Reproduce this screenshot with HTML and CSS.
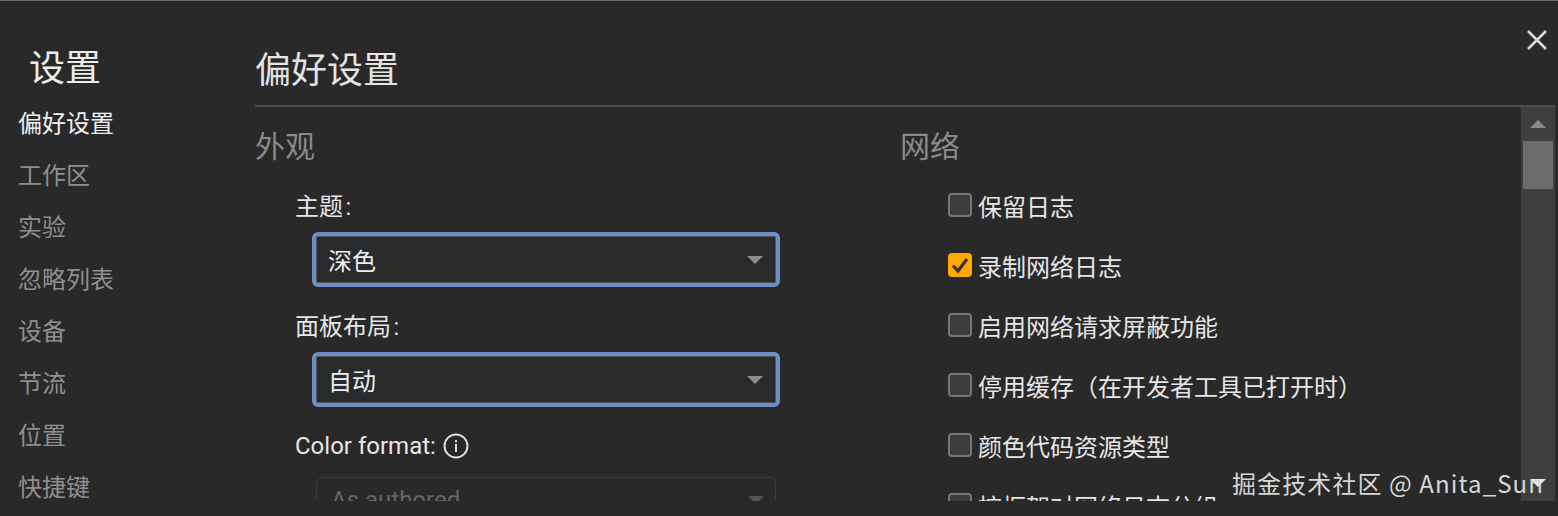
FILE: index.html
```html
<!DOCTYPE html>
<html lang="zh-CN">

<head>
    <meta charset="UTF-8">
    <title>设置</title>
    <link rel="stylesheet" href="styles.css">
</head>

<body>
    <div class="settings">
        <div class="sidebar">
            <h2>设置</h2>
            <ul class="nav">
                <li class="active">偏好设置</li>
                <li>工作区</li>
                <li>实验</li>
                <li>忽略列表</li>
                <li>设备</li>
                <li>节流</li>
                <li>位置</li>
                <li>快捷键</li>
            </ul>
        </div>
        <div class="main">
            <h1>偏好设置</h1>
            <div class="body">
                <div class="columns">
                    <div class="col-appearance">
                        <h3>外观</h3>
                        <div class="field">
                            <div class="field-label cjk">主题&hairsp;:</div>
                            <div class="select focused"><span>深色</span><i class="arrow"></i></div>
                        </div>
                        <div class="field">
                            <div class="field-label cjk">面板布局&hairsp;:</div>
                            <div class="select focused"><span>自动</span><i class="arrow"></i></div>
                        </div>
                        <div class="field">
                            <div class="field-label">Color format:
                                <svg class="info" width="26" height="26" viewBox="0 0 26 26">
                                    <circle cx="13" cy="13" r="11.5" fill="none" stroke="#dcdcdc" stroke-width="2" />
                                    <rect x="12" y="11" width="2" height="8" fill="#dcdcdc" />
                                    <rect x="12" y="7" width="2" height="2.4" fill="#dcdcdc" />
                                </svg>
                            </div>
                            <div class="select disabled"><span>As authored</span><i class="arrow"></i></div>
                        </div>
                    </div>
                    <div class="col-network">
                        <h3>网络</h3>
                        <div class="checks">
                            <div class="check"><span class="box"></span>保留日志</div>
                            <div class="check">
                                <span class="box checked">
                                    <svg width="24" height="24" viewBox="0 0 24 24">
                                        <path d="M5 12.5l5 5.5 9-12" fill="none" stroke="#3a3228" stroke-width="3.2" />
                                    </svg>
                                </span>录制网络日志
                            </div>
                            <div class="check"><span class="box"></span>启用网络请求屏蔽功能</div>
                            <div class="check"><span class="box"></span>停用缓存（在开发者工具已打开时）</div>
                            <div class="check"><span class="box"></span>颜色代码资源类型</div>
                            <div class="check"><span class="box"></span>按框架对网络日志分组</div>
                        </div>
                    </div>
                </div>
                <div class="scrollbar">
                    <div class="scroll-btn"><i class="up"></i></div>
                    <div class="thumb"></div>
                    <div class="scroll-end"><i class="down"></i></div>
                </div>
            </div>
        </div>
        <svg class="close" width="22" height="22" viewBox="0 0 22 22">
            <path d="M2 2l18 18M20 2L2 20" stroke="#d8d8d8" stroke-width="2.6" />
        </svg>
    </div>
    <div class="watermark">掘金技术社区 @ Anita_Sun</div>
</body>

</html>
```

FILE: styles.css
```css
body {
    margin: 0;
    height: 516px;
    overflow: hidden;
    background: #292929;
    color: #e8e8e8;
    font-family: Roboto, "Noto Sans CJK SC", sans-serif;
    font-size: 24px;
}

.settings {
    display: flex;
    height: 501px;
    box-sizing: border-box;
    border-top: 1px solid #6a6a6a;
    overflow: hidden;
    position: relative;
}

.sidebar {
    width: 255px;
    flex-shrink: 0;
}

.sidebar h2 {
    margin: 41px 0 0 29px;
    font-size: 36px;
    font-weight: 400;
    line-height: 54px;
    color: #ececec;
}

.nav {
    list-style: none;
    margin: 2px 0 0 18px;
    padding: 0;
}

.nav li {
    height: 52px;
    line-height: 52px;
    color: #8f8f8f;
}

.nav li.active {
    color: #f0f0f0;
}

.main {
    flex: 1;
    display: flex;
    flex-direction: column;
    min-width: 0;
}

h1 {
    margin: 39px 3px 0 0;
    height: 65px;
    font-size: 36px;
    font-weight: 400;
    line-height: 63px;
    color: #e4e4e4;
    border-bottom: 2px solid #4d4d4d;
}

.body {
    flex: 1;
    display: flex;
    min-height: 0;
}

.columns {
    flex: 1;
    display: flex;
    overflow: hidden;
}

h3 {
    margin: 14px 0 0;
    font-size: 30px;
    font-weight: 400;
    line-height: 52px;
    color: #8a8a8a;
}

.col-appearance {
    width: 645px;
    flex-shrink: 0;
}

.field {
    margin: 14px 0 0 40px;
}

.field + .field {
    margin-top: 20px;
}

.field-label {
    display: flex;
    align-items: center;
    gap: 7px;
    box-sizing: border-box;
    height: 36px;
    padding-top: 2px;
    color: #e6e6e6;
}

.field-label.cjk {
    padding-top: 0;
    padding-bottom: 1px;
}

.select {
    display: flex;
    align-items: center;
    justify-content: space-between;
    box-sizing: border-box;
    width: 468px;
    height: 55px;
    margin: 9px 0 0 17px;
    border-radius: 6px;
    background: #282a2c;
    color: #ededed;
}

.select.focused {
    border: 4px solid #6a8fc4;
    box-shadow: inset 0 0 0 1px #555;
    padding: 0 13px 0 12px;
}

.select.disabled {
    width: 460px;
    height: 46px;
    margin: 14px 0 0 21px;
    padding: 0 11px 0 14px;
    border: 1px solid #3c3c3c;
    background: #292929;
    color: #666;
}

.arrow {
    width: 0;
    height: 0;
    border-left: 8px solid transparent;
    border-right: 8px solid transparent;
    border-top: 8px solid #8f8f8f;
}

.select.disabled .arrow {
    border-top-color: #555;
}

.col-network {
    flex: 1;
}

.checks {
    margin: 2px 0 0 48px;
}

.check {
    display: flex;
    align-items: center;
    gap: 6px;
    height: 60px;
    white-space: nowrap;
    color: #e6e6e6;
}

.box {
    box-sizing: border-box;
    width: 24px;
    height: 24px;
    flex-shrink: 0;
    border: 2px solid #757575;
    border-radius: 4px;
    background: #3c3c3c;
}

.box.checked {
    border: none;
    background: #ffa800;
}

.box svg {
    display: block;
}

.scrollbar {
    width: 34px;
    margin-right: 3px;
    flex-shrink: 0;
    display: flex;
    flex-direction: column;
    align-items: center;
    background: #3f3f3f;
}

.scroll-btn {
    display: flex;
    align-items: center;
    justify-content: center;
    width: 100%;
    height: 34px;
}

.up {
    width: 0;
    height: 0;
    border-left: 8px solid transparent;
    border-right: 8px solid transparent;
    border-bottom: 8px solid #8a8a8a;
}

.thumb {
    width: 30px;
    height: 48px;
    background: #6d6d6d;
}

.scroll-end {
    flex: 1;
    display: flex;
    align-items: flex-end;
    padding-bottom: 14px;
}

.down {
    width: 0;
    height: 0;
    border-left: 8px solid transparent;
    border-right: 8px solid transparent;
    border-top: 8px solid #e8e8e8;
}

.close {
    position: absolute;
    top: 28px;
    right: 10px;
}

.watermark {
    position: absolute;
    left: 1232px;
    top: 465px;
    font-family: "Noto Sans CJK SC", sans-serif;
    font-size: 24px;
    line-height: 36px;
    letter-spacing: 1.1px;
    white-space: nowrap;
    color: #d6d6d6;
}
```
